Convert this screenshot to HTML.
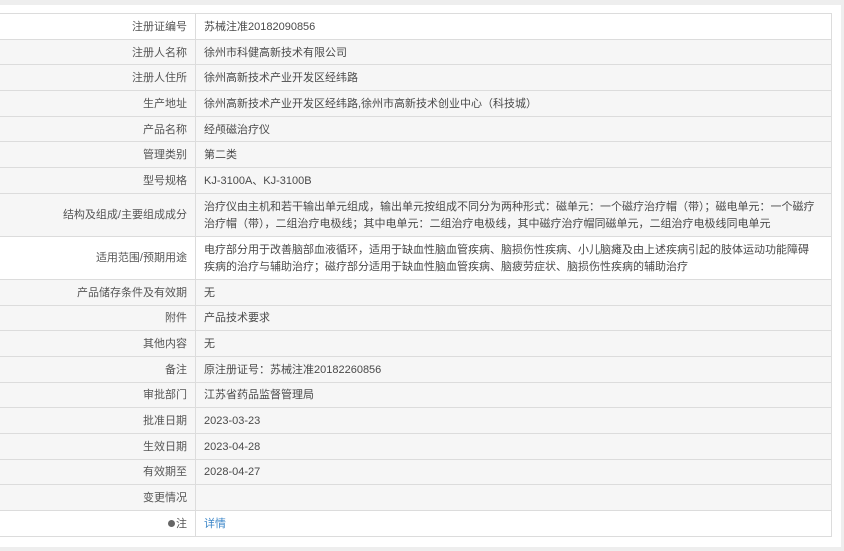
<!DOCTYPE html>
<html><head><meta charset="utf-8"><style>
html,body{margin:0;padding:0;}
body{width:844px;height:551px;background:#eeeeee;overflow:hidden;font-family:"Liberation Sans","Noto Sans CJK SC",sans-serif;font-size:11px;color:#4a4a4a;}
.panel{position:absolute;left:0;top:5px;width:841px;height:542px;background:#fff;}
table{position:absolute;left:-1px;top:13px;width:833px;border-collapse:collapse;background:#f6f6f6;table-layout:fixed;}
td{border:1px solid #dcdcdc;height:24.7px;padding:2px 8px 0 8px;line-height:17px;vertical-align:middle;box-sizing:border-box;}
td.l{width:196px;text-align:right;color:#555;}
td.v{padding-left:8px;padding-right:12px;}
tr{height:25.7px;}
tr.w{background:#fff;}
tr.t{height:43px;}
tr.t td{height:43px;}
a{color:#3b86c8;text-decoration:none;}
</style></head><body>
<div class="panel"></div>
<table>
<tr class="w"><td class="l">注册证编号</td><td class="v">苏械注准20182090856</td></tr>
<tr><td class="l">注册人名称</td><td class="v">徐州市科健高新技术有限公司</td></tr>
<tr><td class="l">注册人住所</td><td class="v">徐州高新技术产业开发区经纬路</td></tr>
<tr><td class="l">生产地址</td><td class="v">徐州高新技术产业开发区经纬路,徐州市高新技术创业中心（科技城）</td></tr>
<tr><td class="l">产品名称</td><td class="v">经颅磁治疗仪</td></tr>
<tr><td class="l">管理类别</td><td class="v">第二类</td></tr>
<tr><td class="l">型号规格</td><td class="v">KJ-3100A、KJ-3100B</td></tr>
<tr class="t"><td class="l">结构及组成/主要组成成分</td><td class="v">治疗仪由主机和若干输出单元组成，输出单元按组成不同分为两种形式：磁单元：一个磁疗治疗帽（带）；磁电单元：一个磁疗治疗帽（带），二组治疗电极线；其中电单元：二组治疗电极线，其中磁疗治疗帽同磁单元，二组治疗电极线同电单元</td></tr>
<tr class="t w"><td class="l">适用范围/预期用途</td><td class="v">电疗部分用于改善脑部血液循环，适用于缺血性脑血管疾病、脑损伤性疾病、小儿脑瘫及由上述疾病引起的肢体运动功能障碍疾病的治疗与辅助治疗；磁疗部分适用于缺血性脑血管疾病、脑疲劳症状、脑损伤性疾病的辅助治疗</td></tr>
<tr><td class="l">产品储存条件及有效期</td><td class="v">无</td></tr>
<tr><td class="l">附件</td><td class="v">产品技术要求</td></tr>
<tr><td class="l">其他内容</td><td class="v">无</td></tr>
<tr><td class="l">备注</td><td class="v">原注册证号：苏械注准20182260856</td></tr>
<tr><td class="l">审批部门</td><td class="v">江苏省药品监督管理局</td></tr>
<tr><td class="l">批准日期</td><td class="v">2023-03-23</td></tr>
<tr><td class="l">生效日期</td><td class="v">2023-04-28</td></tr>
<tr><td class="l">有效期至</td><td class="v">2028-04-27</td></tr>
<tr><td class="l">变更情况</td><td class="v"></td></tr>
<tr class="w"><td class="l"><span style="display:inline-block;width:7px;height:7px;border-radius:50%;background:#666;margin-right:1px;vertical-align:0px"></span>注</td><td class="v"><a>详情</a></td></tr>
</table>
</body></html>
